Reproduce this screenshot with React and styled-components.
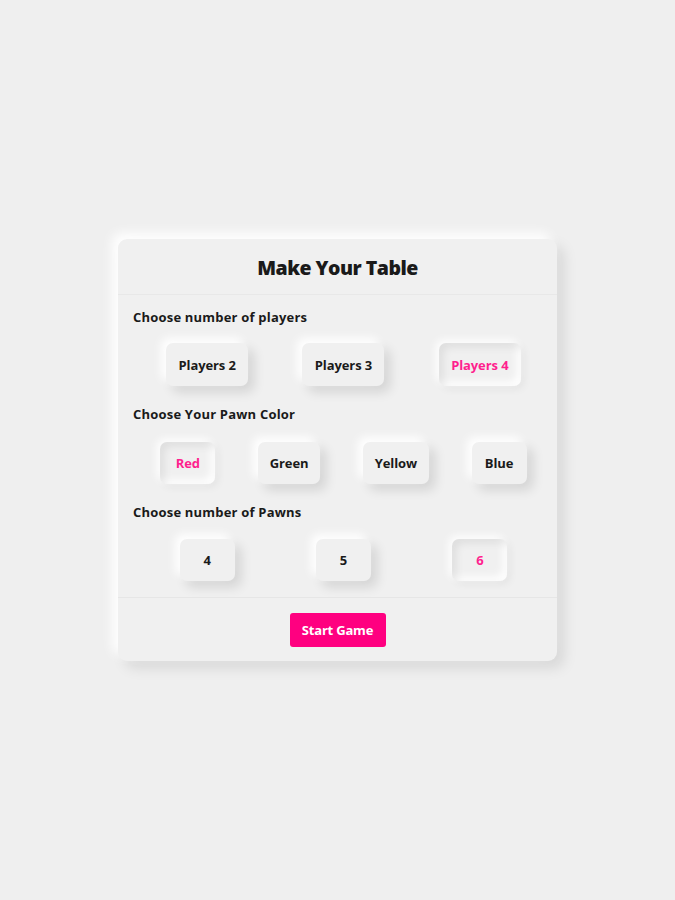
import React, { useState } from "react";
import styled, { createGlobalStyle, css } from "styled-components";

const Global = createGlobalStyle`
  html, body { margin: 0; padding: 0; background: #efefef; }
  body { font-family: "Open Sans", "DejaVu Sans", sans-serif; }
`;

const Page = styled.div`
  width: 675px;
  height: 900px;
  display: flex;
  justify-content: center;
  padding-top: 239px;
  box-sizing: border-box;
`;

const Card = styled.div`
  width: 439px;
  height: 422px;
  background: #f0f0f0;
  border-radius: 9px;
  box-shadow: -6px -6px 12px #ffffff, 7px 7px 14px rgba(0, 0, 0, 0.1);
  display: flex;
  flex-direction: column;
  box-sizing: border-box;
`;

const Header = styled.div`
  height: 56px;
  display: flex;
  align-items: center;
  justify-content: center;
  border-bottom: 1px solid #e8e8e8;
  box-sizing: border-box;
`;

const Title = styled.h1`
  margin: 0;
  font-size: 19.5px;
  font-weight: 800;
  color: #1a1a1a;
  letter-spacing: -0.5px;
  padding-top: 1px;
`;

const Body = styled.div`
  padding: 13px 15px 0 15px;
  height: 303px;
  box-sizing: border-box;
  border-bottom: 1px solid #e6e6e6;
  display: flex;
  flex-direction: column;
`;

const Label = styled.div`
  font-size: 13px;
  font-weight: 700;
  color: #1a1a1a;
  height: 18px;
  line-height: 18px;
  letter-spacing: 0.2px;
`;

const Row = styled.div`
  display: flex;
  justify-content: space-around;
  align-items: center;
  margin: ${(p) => p.$mt}px -6px ${(p) => p.$mb}px 6px;
`;

const Choice = styled.button`
  font-family: inherit;
  border: none;
  outline: none;
  background: #f0f0f0;
  height: ${(p) => p.$h || 43}px;
  width: ${(p) => p.$w}px;
  border-radius: 7px;
  font-size: 13px;
  font-weight: 700;
  letter-spacing: -0.1px;
  color: #1a1a1a;
  cursor: pointer;
  padding: 0;
  box-shadow: -5px -5px 10px #ffffff, 6px 6px 12px rgba(0, 0, 0, 0.12);
  ${(p) =>
    p.$active &&
    css`
      color: #ff1f8e;
      box-shadow: inset 4px 4px 8px rgba(0, 0, 0, 0.08),
        inset -4px -4px 8px #ffffff, -3px -3px 8px #ffffff,
        3px 3px 8px rgba(0, 0, 0, 0.06);
    `}
`;

const Footer = styled.div`
  flex: 1;
  display: flex;
  align-items: flex-start;
  justify-content: center;
  padding-top: 15px;
`;

const StartButton = styled.button`
  font-family: inherit;
  border: none;
  background: #ff0080;
  color: #ffffff;
  width: 96px;
  height: 34px;
  border-radius: 3px;
  font-size: 13px;
  font-weight: 700;
  letter-spacing: -0.2px;
  cursor: pointer;
`;

export default function App() {
  const [players, setPlayers] = useState(4);
  const [color, setColor] = useState("Red");
  const [pawns, setPawns] = useState(6);

  return (
    <Page>
      <Global />
      <Card>
        <Header>
          <Title>Make Your Table</Title>
        </Header>
        <Body>
          <Label>Choose number of players</Label>
          <Row $mt={17} $mb={19}>
            {[2, 3, 4].map((n) => (
              <Choice
                key={n}
                $w={82}
                $active={players === n}
                onClick={() => setPlayers(n)}
              >
                Players {n}
              </Choice>
            ))}
          </Row>
          <Label>Choose Your Pawn Color</Label>
          <Row $mt={19} $mb={19}>
            {[
              ["Red", 55],
              ["Green", 62],
              ["Yellow", 66],
              ["Blue", 55],
            ].map(([c, w]) => (
              <Choice
                key={c}
                $w={w}
                $h={42}
                $active={color === c}
                onClick={() => setColor(c)}
              >
                {c}
              </Choice>
            ))}
          </Row>
          <Label>Choose number of Pawns</Label>
          <Row $mt={18} $mb={0}>
            {[4, 5, 6].map((n) => (
              <Choice
                key={n}
                $w={55}
                $h={42}
                $active={pawns === n}
                onClick={() => setPawns(n)}
              >
                {n}
              </Choice>
            ))}
          </Row>
        </Body>
        <Footer>
          <StartButton>Start Game</StartButton>
        </Footer>
      </Card>
    </Page>
  );
}
